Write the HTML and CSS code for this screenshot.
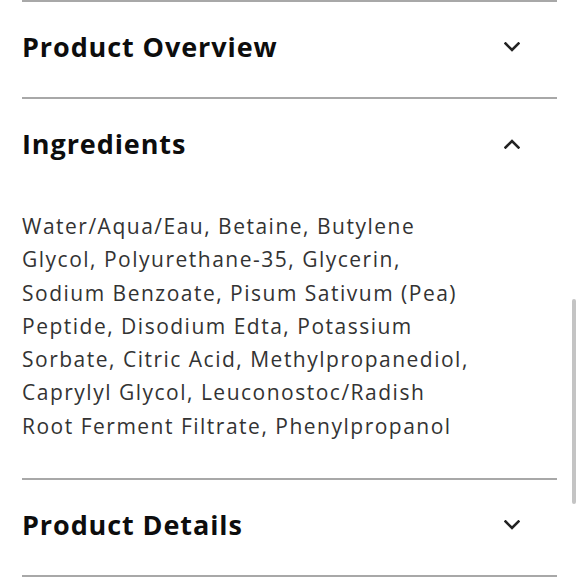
FILE: index.html
```html
<!DOCTYPE html>
<html lang="en">
<head>
<meta charset="utf-8">
<title>Product accordion</title>
<link rel="stylesheet" href="styles.css">
</head>
<body>
<div class="page">
  <section class="acc">
    <div class="acc-head">
      <h2 class="acc-title">Product Overview</h2>
      <svg class="chev" viewBox="0 0 16 10" width="16" height="10"><path d="M1.5 1.5 L8 8 L14.5 1.5" /></svg>
    </div>
  </section>
  <section class="acc open">
    <div class="acc-head">
      <h2 class="acc-title">Ingredients</h2>
      <svg class="chev" viewBox="0 0 16 10" width="16" height="10"><path d="M1.5 8.5 L8 2 L14.5 8.5" /></svg>
    </div>
    <p class="acc-body">Water/Aqua/Eau, Betaine, Butylene<br>Glycol, Polyurethane-35, Glycerin,<br>Sodium Benzoate, Pisum Sativum (Pea)<br>Peptide, Disodium Edta, Potassium<br>Sorbate, Citric Acid, Methylpropanediol,<br>Caprylyl Glycol, Leuconostoc/Radish<br>Root Ferment Filtrate, Phenylpropanol</p>
  </section>
  <section class="acc">
    <div class="acc-head">
      <h2 class="acc-title">Product Details</h2>
      <svg class="chev" viewBox="0 0 16 10" width="16" height="10"><path d="M1.5 1.5 L8 8 L14.5 1.5" /></svg>
    </div>
  </section>
</div>
<div class="scrollbar"></div>
</body>
</html>
```
FILE: styles.css
```css
html, body {
  margin: 0;
  padding: 0;
  background: #fff;
}
body {
  width: 580px;
  height: 580px;
  overflow: hidden;
  position: relative;
  font-family: "Open Sans", "Liberation Sans", sans-serif;
}
.page {
  width: 535px;
  margin-left: 22px;
  border-top: 2px solid #a8a8a8;
}
.acc {
  border-bottom: 2px solid #a8a8a8;
}
.acc-head {
  box-sizing: border-box;
  height: 95px;
  display: flex;
  align-items: center;
  justify-content: space-between;
  padding-right: 37px;
  padding-bottom: 6px;
}
.acc-title {
  margin: 0;
  font-size: 27px;
  font-weight: 700;
  color: #0d0d0d;
  letter-spacing: 0.9px;
}
.chev {
  fill: none;
  stroke: #222;
  stroke-width: 2.6;
  stroke-linecap: square;
}
.acc-body {
  margin: 0;
  padding: 16px 0 35px;
  font-size: 21px;
  line-height: 33.3px;
  color: #333;
  letter-spacing: 1.5px;
  white-space: nowrap;
}
.scrollbar {
  position: absolute;
  left: 572px;
  top: 299px;
  width: 4px;
  height: 205px;
  border-radius: 2px;
  background: #c4c4c4;
}
```
